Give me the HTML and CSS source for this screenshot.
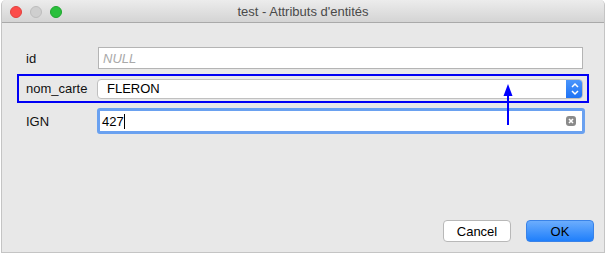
FILE: index.html
```html
<!DOCTYPE html>
<html lang="fr">
<head>
    <meta charset="UTF-8">
    <title>test - Attributs d'entités</title>
    <link rel="stylesheet" href="styles.css">
</head>
<body>
    <div class="window">
        <!-- Title bar -->
        <div class="titlebar">
            <div class="lights">
                <span class="light red"></span>
                <span class="light grey"></span>
                <span class="light green"></span>
            </div>
            <div class="title">test - Attributs d'entités</div>
        </div>
        <!-- Form -->
        <div class="content">
            <div class="form">
                <div class="row">
                    <label>id</label>
                    <div class="field null">NULL</div>
                </div>
                <div class="row highlight">
                    <label>nom_carte</label>
                    <div class="combo">
                        <span>FLERON</span>
                        <span class="stepper">
                            <svg width="10" height="14" viewBox="0 0 10 14">
                                <path d="M2 5 L5 2 L8 5 M2 9 L5 12 L8 9" fill="none" stroke="#fff" stroke-width="1.5"/>
                            </svg>
                        </span>
                    </div>
                </div>
                <div class="row last">
                    <label>IGN</label>
                    <div class="field focus">
                        <span>427<span class="caret"></span></span>
                        <svg class="clear" width="10" height="10" viewBox="0 0 10 10">
                            <rect x="0" y="0" width="10" height="10" rx="3" fill="#8a8a8a"/>
                            <path d="M3 3 L7 7 M7 3 L3 7" stroke="#fff" stroke-width="1.6"/>
                        </svg>
                    </div>
                </div>
            </div>
            <div class="footer">
                <button class="btn">Cancel</button>
                <button class="btn primary">OK</button>
            </div>
        </div>
        <!-- Annotation arrow -->
        <svg class="arrow" width="12" height="42" viewBox="0 0 12 42">
            <path d="M6 0 L10.5 12 L1.5 12 Z" fill="#0000ff"/>
            <rect x="5" y="11" width="2" height="30" fill="#0000ff"/>
        </svg>
    </div>
</body>
</html>
```

FILE: styles.css
```css
body {
    margin: 0;
    background: #ffffff;
    font-family: "Liberation Sans", Arial, sans-serif;
    font-size: 13px;
    color: #111;
}
.window {
    position: relative;
    width: 604px;
    height: 253px;
    margin-left: 1px;
    border: 1px solid #c4c4c4;
    border-top: none;
    border-radius: 5px 5px 0 0;
    background: #e8e8e8;
    display: flex;
    flex-direction: column;
    box-sizing: border-box;
    overflow: hidden;
}
/* Title bar */
.titlebar {
    position: relative;
    height: 23px;
    box-sizing: border-box;
    background: linear-gradient(#ececec, #d4d4d4);
    border-bottom: 1px solid #a9a9a9;
    display: flex;
    align-items: center;
    justify-content: center;
}
.lights {
    position: absolute;
    left: 8px;
    top: 6px;
    display: flex;
    gap: 8px;
}
.light {
    width: 12px;
    height: 12px;
    border-radius: 50%;
    box-sizing: border-box;
}
.red {
    background: #fc4c4a;
    border: 1px solid #e2403d;
}
.grey {
    background: #cfcfcf;
    border: 1px solid #bdbdbd;
}
.green {
    background: #2ac03c;
    border: 1px solid #1ea52e;
}
.title {
    color: #4a4a4a;
    font-size: 13px;
    padding-top: 1px;
}
/* Form */
.content {
    flex: 1;
    display: flex;
    flex-direction: column;
    padding: 22px 0 10px 15px;
}
.form {
    display: flex;
    flex-direction: column;
    gap: 3px;
    width: 572px;
}
.row {
    display: flex;
    align-items: center;
    height: 26px;
    box-sizing: border-box;
    border: 2px solid transparent;
    padding: 0 4px 0 7px;
}
.row label {
    width: 72px;
    flex-shrink: 0;
}
.row.highlight {
    height: 29px;
    border-color: #0000f5;
}
.row.last {
    height: 28px;
    margin-top: 1px;
}
.field {
    flex: 1;
    height: 22px;
    box-sizing: border-box;
    background: #fff;
    border: 1px solid #b4b4b4;
    display: flex;
    align-items: center;
    padding-left: 4px;
}
.null {
    color: #a9a9a9;
    font-style: italic;
}
.focus {
    height: 26px;
    margin-left: -1px;
    margin-right: -2px;
    border: 3px solid #6aa1f0;
    border-radius: 3px;
    padding-left: 2px;
    justify-content: space-between;
    padding-right: 6px;
    color: #000;
}
.caret {
    display: inline-block;
    width: 1px;
    height: 15px;
    background: #000;
    vertical-align: -3px;
}
.combo {
    flex: 1;
    height: 20px;
    margin-left: -1px;
    box-sizing: border-box;
    background: #fff;
    border: 1px solid #c0c0c0;
    border-radius: 4px;
    display: flex;
    align-items: center;
    justify-content: space-between;
    padding-left: 9px;
    color: #000;
    overflow: hidden;
}
.stepper {
    width: 17px;
    height: 20px;
    margin-right: -1px;
    background: linear-gradient(#4c97fb, #1b70f5);
    border-radius: 0 4px 4px 0;
    display: flex;
    align-items: center;
    justify-content: center;
}
/* Footer */
.footer {
    margin-top: auto;
    display: flex;
    justify-content: flex-end;
    gap: 15px;
    padding-right: 10px;
}
.btn {
    width: 68px;
    height: 22px;
    font-family: "Liberation Sans", Arial, sans-serif;
    font-size: 13px;
    color: #000;
    background: #fff;
    border: 1px solid #b8b8b8;
    border-radius: 4px;
    padding: 0;
}
.btn.primary {
    background: linear-gradient(#6cadfd, #1f7ffb);
    border-color: #3a83e8;
}
.arrow {
    position: absolute;
    left: 500px;
    top: 84px;
}
```
